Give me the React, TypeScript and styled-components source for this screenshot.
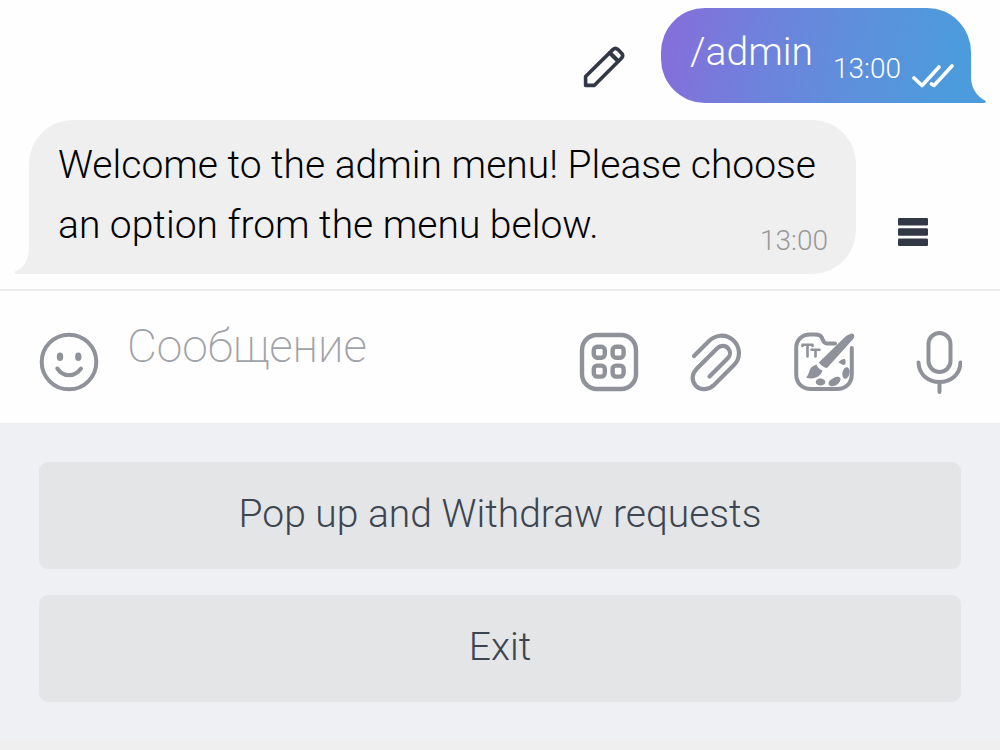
import React from "react";
import styled, { createGlobalStyle } from "styled-components";

const GlobalStyle = createGlobalStyle`
  *, *::before, *::after { box-sizing: border-box; }
  body {
    margin: 0;
    background: #efefef;
    font-family: Roboto, "Open Sans", sans-serif;
    font-weight: 300;
  }
  button, input { font: inherit; }
`;

const Screen = styled.div`
  display: flex;
  flex-direction: column;
  min-height: 100vh;
`;

const Chat = styled.main`
  display: flex;
  flex-direction: column;
  gap: 17px;
  padding: 8px 29px 15px;
  background: #fefefe;
`;

const MessageRow = styled.div<{ $outgoing?: boolean }>`
  display: flex;
  align-items: flex-end;
  justify-content: ${(p) => (p.$outgoing ? "flex-end" : "space-between")};
  gap: 36px;
  padding-right: ${(p) => (p.$outgoing ? 0 : 42)}px;
`;

const IconButton = styled.button<{ $drop?: number; $dark?: boolean }>`
  display: flex;
  flex: none;
  margin: 0 0 ${(p) => p.$drop ?? 0}px;
  padding: 0;
  border: 0;
  background: none;
  color: ${(p) => (p.$dark ? "#323845" : "#8f9399")};
  cursor: pointer;
`;

const Icon = styled.svg`
  display: block;
  fill: none;
  stroke: currentColor;
  stroke-linecap: round;
  stroke-linejoin: round;
`;

const ReadMark = styled(Icon)`
  margin-top: 8px;
`;

const OutgoingBubble = styled.div`
  position: relative;
  display: flex;
  height: 95px;
  padding: 14px 17px 0 29px;
  border-radius: 44px 44px 0 44px;
  background: linear-gradient(100deg, #8370da 6%, #6f81dc 32%, #5c91dc 65%, #4c9bdd 94%);
  color: #fff;
`;

const IncomingBubble = styled.div`
  position: relative;
  flex: 0 1 827px;
  padding: 15px 28px 19px 29px;
  border-radius: 44px 44px 44px 0;
  background: #efefef;
  color: #000;
`;

const Tail = styled.svg<{ $side: "left" | "right" }>`
  position: absolute;
  bottom: 0;
  ${(p) => p.$side}: -15px;
`;

const MessageText = styled.p`
  display: flow-root;
  margin: 0;
  font-size: 39px;
  line-height: 60px;
`;

const Time = styled.time<{ $trailing?: boolean }>`
  float: ${(p) => (p.$trailing ? "right" : "none")};
  margin-top: ${(p) => (p.$trailing ? 32 : 0)}px;
  font-size: 28px;
  line-height: 28px;
  color: ${(p) => (p.$trailing ? "#999" : "inherit")};
`;

const OutgoingMeta = styled.div`
  display: flex;
  align-items: flex-start;
  gap: 11px;
  padding: 33px 0 0 20px;
`;

const Composer = styled.form`
  display: flex;
  align-items: center;
  padding: 9px 38px 0 39px;
  height: 134px;
  border-top: 2px solid #ebebeb;
  background: #fefefe;
`;

const MessageInput = styled.input`
  flex: 1;
  min-width: 0;
  margin: 0 20px 32px 28px;
  padding: 0;
  border: 0;
  outline: 0;
  background: none;
  color: #000;
  font-size: 46px;
  line-height: 56px;
  &::placeholder {
    color: #9fa2a7;
    font-weight: 200;
    opacity: 1;
  }
`;

const Tools = styled.div`
  display: flex;
  align-items: center;
  gap: 50px;
`;

const Keyboard = styled.section`
  display: grid;
  gap: 26px;
  padding: 39px 39px 38px;
  background: #eff0f4;
`;

const KeyboardButton = styled.button`
  height: 107px;
  padding: 0 20px 4px;
  border: 0;
  border-radius: 9px;
  background: #e4e5e7;
  color: #3d4650;
  font-size: 39px;
  line-height: 48px;
  cursor: pointer;
`;

export default function App() {
  return (
    <Screen>
      <GlobalStyle />
      <Chat>
        <MessageRow $outgoing>
          <IconButton type="button" aria-label="Edit" $drop={15} $dark>
            <Icon width="42" height="42" viewBox="0 0 42 42" strokeWidth="3.6">
              <path d="M2.6 39.4V30.5L29.8 3.6Q32.4 1.2 35 3.6L38.6 7.2Q40.8 9.8 38.4 12.2L11.2 39.4Z" />
              <path d="M27 7L35 15" strokeWidth="4" />
            </Icon>
          </IconButton>
          <OutgoingBubble>
            <MessageText>/admin</MessageText>
            <OutgoingMeta>
              <Time>13:00</Time>
              <ReadMark width="42" height="26" viewBox="0 0 42 26" strokeWidth="3.6" aria-label="Read" role="img">
                <path d="M2 15L10 22.5L27 4" />
                <path d="M19.5 21L22 22.5L40 3" />
              </ReadMark>
            </OutgoingMeta>
            <Tail $side="right" width="16" height="46" viewBox="0 0 16 46" aria-hidden="true">
              <path d="M0 0H1V20C1 32 8 40 15 43.5C16.5 44.5 16 46 14 46H0Z" fill="#4c9bdd" />
            </Tail>
          </OutgoingBubble>
        </MessageRow>
        <MessageRow>
          <IncomingBubble>
            <MessageText>
              Welcome to the admin menu! Please choose an option from the menu below.
              <Time $trailing>13:00</Time>
            </MessageText>
            <Tail $side="left" width="16" height="46" viewBox="0 0 16 46" aria-hidden="true">
              <path d="M16 0H15V20C15 32 9 41 0.8 43.6C-0.2 44.2 1 46 3 46H16Z" fill="#efefef" />
            </Tail>
          </IncomingBubble>
          <IconButton type="button" aria-label="Menu" $drop={27} $dark>
            <Icon width="32" height="30" viewBox="0 0 32 30">
              <g fill="currentColor" stroke="none">
                <rect x="1" y="1" width="30" height="7.4" rx="1.2" />
                <rect x="1" y="11.3" width="30" height="7.4" rx="1.2" />
                <rect x="1" y="21.6" width="30" height="7.4" rx="1.2" />
              </g>
            </Icon>
          </IconButton>
        </MessageRow>
      </Chat>

      <Composer onSubmit={(e) => e.preventDefault()}>
        <IconButton type="button" aria-label="Emoji">
          <Icon width="60" height="60" viewBox="0 0 60 60" strokeWidth="4">
            <circle cx="30" cy="30" r="27.3" />
            <ellipse cx="21" cy="24.7" rx="3.2" ry="4.3" fill="currentColor" stroke="none" />
            <ellipse cx="39.3" cy="24.7" rx="3.2" ry="4.3" fill="currentColor" stroke="none" />
            <path d="M18.3 36.5Q23 43.3 30 43.3T42 36.5" />
          </Icon>
        </IconButton>
        <MessageInput type="text" placeholder="Сообщение" aria-label="Сообщение" />
        <Tools>
          <IconButton type="button" aria-label="Bot keyboard">
            <Icon width="60" height="60" viewBox="0 0 60 60" strokeWidth="4.4">
              <rect x="3" y="3" width="54" height="54" rx="15" />
              <rect x="14.8" y="14.8" width="11" height="11" rx="3.5" />
              <rect x="33.6" y="14.8" width="11" height="11" rx="3.5" />
              <rect x="14.8" y="33.6" width="11" height="11" rx="3.5" />
              <rect x="33.6" y="33.6" width="11" height="11" rx="3.5" />
            </Icon>
          </IconButton>
          <IconButton type="button" aria-label="Attach file">
            <Icon width="54" height="60" viewBox="0 0 54 60" strokeWidth="4.2">
              <path d="M5 24L19.5 9.5C26 3 36 1.2 44 8C52 15.5 51.5 26.5 45 33L25 53C19.5 58.2 11.5 58.6 7 54C2.2 49 2.6 42 8 36.5L28 16.5C31.5 13.2 36.3 13 39 16.2C42 19.4 41.5 23.5 38.5 26.5L20.5 44.5" />
            </Icon>
          </IconButton>
          <IconButton type="button" aria-label="Sticker editor">
            <Icon width="62" height="62" viewBox="0 0 62 62" strokeWidth="4">
              <path d="M42 12.5H34C30.5 12.5 30 10 29 7C28 4 26 3.5 22 3.5H17C9 3.5 3.2 9 3.2 17V43C3.2 52 9 58 18 58H44C53 58 58.8 52 58.8 43V17" />
              <g fill="currentColor" stroke="none">
                <path d="M60 2.8C62 4 61.3 6.2 60 8.2L34 37Q29.5 36.3 25.8 31.5L53 5Q58.5 1.5 60 2.8Z" />
                <path d="M23.5 33.5Q25 38 29.5 39.5C27.5 46.5 19 49 13 46.5C17.5 43 14.5 36 23.5 33.5Z" />
                <ellipse cx="27.5" cy="51" rx="4.8" ry="3.6" />
                <path d="M38 55.2C35 54.7 34.7 51 37.5 49C41 46.8 43 44.8 46.5 46.2C50 48.3 44.5 56 38 55.2Z" />
                <ellipse cx="53" cy="42" rx="3.6" ry="5.8" transform="rotate(12 53 42)" />
                <path d="M45.5 31.5Q48 27.5 52 28Q54 34 50 34Z" />
              </g>
              <path d="M9.5 13.8H19.5V15M9.5 13.8V15M14.5 13.8V25.5M18.5 18.8H26.5M22.5 18.8V25.5" strokeWidth="2.6" />
            </Icon>
          </IconButton>
          <IconButton type="button" aria-label="Record voice message">
            <Icon width="57" height="64" viewBox="5 0 57 64" strokeWidth="4">
              <rect x="28.5" y="3" width="22" height="39" rx="11" />
              <path d="M18.5 32.5C19 44.5 28 52 39.5 52S60 44.5 60.5 32.5M39.5 52V62" />
            </Icon>
          </IconButton>
        </Tools>
      </Composer>

      <Keyboard aria-label="Reply options">
        <KeyboardButton type="button">Pop up and Withdraw requests</KeyboardButton>
        <KeyboardButton type="button">Exit</KeyboardButton>
      </Keyboard>
    </Screen>
  );
}
